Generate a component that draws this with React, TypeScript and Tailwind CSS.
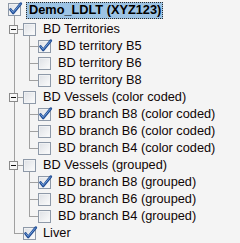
import React from 'react';

type Node = {
  label: string;
  level: number;
  checked?: boolean;
  expander?: boolean;
  bold?: boolean;
  selected?: boolean;
  lastChild?: boolean; // last leaf under a group
  lastTop?: boolean; // last item directly under the root
};

const rows: Node[] = [
  { label: 'Demo_LDLT (XYZ123)', level: 0, checked: true, bold: true, selected: true },
  { label: 'BD Territories', level: 1, expander: true },
  { label: 'BD territory B5', level: 2, checked: true },
  { label: 'BD territory B6', level: 2 },
  { label: 'BD territory B8', level: 2, lastChild: true },
  { label: 'BD Vessels (color coded)', level: 1, expander: true },
  { label: 'BD branch B8 (color coded)', level: 2, checked: true },
  { label: 'BD branch B6 (color coded)', level: 2 },
  { label: 'BD branch B4 (color coded)', level: 2, lastChild: true },
  { label: 'BD Vessels (grouped)', level: 1, expander: true },
  { label: 'BD branch B8 (grouped)', level: 2, checked: true },
  { label: 'BD branch B6 (grouped)', level: 2 },
  { label: 'BD branch B4 (grouped)', level: 2, lastChild: true },
  { label: 'Liver', level: 1, checked: true, lastTop: true },
];

const LINE = '#a0a0a0';

// draws the tree lines, the expander and the checkbox of one row
const Gutter: React.FC<{ node: Node; h: number; by: number }> = ({ node, h, by }) => {
  const bx = 8 + 15 * node.level;
  const mid = by + 6;
  return (
    <svg width={bx + 15} height={h} className="shrink-0 overflow-visible" shapeRendering="crispEdges">
      <defs>
        <linearGradient id="cbfill" x1="0" y1="0" x2="1" y2="1">
          <stop offset="0" stopColor="#dcdfe4" />
          <stop offset="1" stopColor="#fdfdfd" />
        </linearGradient>
      </defs>
      {node.level === 0 && <rect x={14} y={by + 13} width={1} height={h - by - 13} fill={LINE} />}
      {node.level >= 1 && <rect x={14} y={0} width={1} height={node.lastTop ? mid + 1 : h} fill={LINE} />}
      {node.level === 1 && <rect x={15} y={mid} width={8} height={1} fill={LINE} />}
      {node.level === 1 && node.expander && <rect x={29} y={by + 13} width={1} height={h - by - 13} fill={LINE} />}
      {node.level === 2 && (
        <>
          <rect x={29} y={0} width={1} height={node.lastChild ? mid + 1 : h} fill={LINE} />
          <rect x={30} y={mid} width={8} height={1} fill={LINE} />
        </>
      )}
      {node.expander && (
        <g>
          <rect x={9.5} y={mid - 3.5} width={8} height={8} fill="#f7f7f7" stroke="#8a8a8a" />
          <rect x={11} y={mid} width={5} height={1} fill="#111" />
        </g>
      )}
      <rect x={bx + 0.5} y={by + 0.5} width={12} height={12} fill="url(#cbfill)" stroke="#8e99a8" />
      <rect x={bx + 1.5} y={by + 1.5} width={10} height={10} fill="none" stroke="#f4f5f7" strokeOpacity={0.7} />
      {node.checked && (
        <g shapeRendering="geometricPrecision" fill="none" strokeLinecap="round" strokeLinejoin="round">
          <path
            d={`M${bx + 2.5} ${by + 6.5} L${bx + 5.2} ${by + 10} L${bx + 12.8} ${by + 0.6}`}
            stroke="#1f4c94"
            strokeWidth={2.7}
          />
          <path
            d={`M${bx + 2.8} ${by + 6.6} L${bx + 5.2} ${by + 9.4} L${bx + 12.4} ${by + 1}`}
            stroke="#7aa8e4"
            strokeWidth={0.9}
          />
        </g>
      )}
    </svg>
  );
};

const Row: React.FC<{ node: Node }> = ({ node }) =>
  node.level === 0 ? (
    <div className="flex h-[21px] items-start">
      <Gutter node={node} h={21} by={3} />
      <span className="ml-[3px] mt-[2px] flex h-[17px] items-center whitespace-nowrap border border-dotted border-[#2b2b2b] bg-[#9cc3e4] pl-[2px] pr-[1px] text-[12.75px] font-bold leading-none text-black">
        {node.label}
      </span>
    </div>
  ) : (
    <div className="flex h-[17px] items-start">
      <Gutter node={node} h={17} by={2} />
      <span className="ml-[5px] flex h-[17px] items-center whitespace-nowrap text-[12.75px] leading-none text-[#100606]">
        {node.label}
      </span>
    </div>
  );

export default function App() {
  return (
    <div
      className="h-[243px] w-[240px] overflow-hidden bg-[#f4f4f4]"
      style={{ fontFamily: '"Liberation Sans", Arial, sans-serif' }}
    >
      {rows.map((r, i) => (
        <Row key={i} node={r} />
      ))}
    </div>
  );
}
